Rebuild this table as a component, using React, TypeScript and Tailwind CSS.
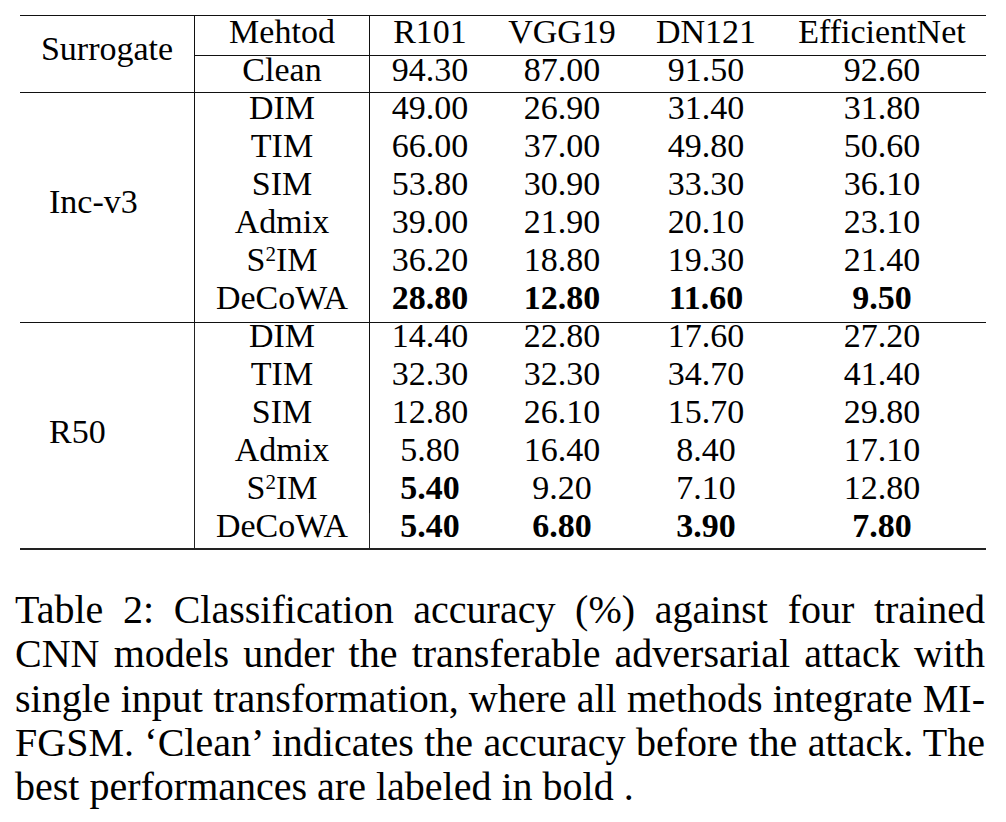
import type { ReactNode } from 'react';

type Row = { method: ReactNode; values: string[]; bold: boolean[] };

const s2im = (
  <>
    S<sup className="text-[21px]">2</sup>IM
  </>
);

const incRows: Row[] = [
  { method: 'DIM', values: ['49.00', '26.90', '31.40', '31.80'], bold: [false, false, false, false] },
  { method: 'TIM', values: ['66.00', '37.00', '49.80', '50.60'], bold: [false, false, false, false] },
  { method: 'SIM', values: ['53.80', '30.90', '33.30', '36.10'], bold: [false, false, false, false] },
  { method: 'Admix', values: ['39.00', '21.90', '20.10', '23.10'], bold: [false, false, false, false] },
  { method: s2im, values: ['36.20', '18.80', '19.30', '21.40'], bold: [false, false, false, false] },
  { method: 'DeCoWA', values: ['28.80', '12.80', '11.60', '9.50'], bold: [true, true, true, true] },
];

const r50Rows: Row[] = [
  { method: 'DIM', values: ['14.40', '22.80', '17.60', '27.20'], bold: [false, false, false, false] },
  { method: 'TIM', values: ['32.30', '32.30', '34.70', '41.40'], bold: [false, false, false, false] },
  { method: 'SIM', values: ['12.80', '26.10', '15.70', '29.80'], bold: [false, false, false, false] },
  { method: 'Admix', values: ['5.80', '16.40', '8.40', '17.10'], bold: [false, false, false, false] },
  { method: s2im, values: ['5.40', '9.20', '7.10', '12.80'], bold: [true, false, false, false] },
  { method: 'DeCoWA', values: ['5.40', '6.80', '3.90', '7.80'], bold: [true, true, true, true] },
];

const captionLines = [
  'Table 2: Classification accuracy (%) against four trained',
  'CNN models under the transferable adversarial attack with',
  'single input transformation, where all methods integrate MI-',
  'FGSM. \u2018Clean\u2019 indicates the accuracy before the attack. The',
];

export default function App() {
  return (
    <div className="w-[1006px] h-[822px] bg-white text-black [font-family:'Liberation_Serif','Times_New_Roman',serif] pt-[15px] overflow-hidden">
      <table className="ml-[20px] w-[966px] table-fixed border-separate border-spacing-0 text-[34px]">
        <colgroup>
          <col className="w-[175px]" />
          <col className="w-[175px]" />
          <col className="w-[120px]" />
          <col className="w-[144px]" />
          <col className="w-[144px]" />
          <col className="w-[208px]" />
        </colgroup>
        <thead>
          <tr>
            <th rowSpan={2} className="font-normal align-top text-center p-0 pt-[17px] leading-[31px] border-t border-b border-r border-[#111]">
              Surrogate
            </th>
            <th className="font-normal align-top text-center p-0 pb-[8px] leading-[31px] border-t border-b border-r border-[#111]">Mehtod</th>
            {['R101', 'VGG19', 'DN121', 'EfficientNet'].map((h) => (
              <th key={h} className="font-normal align-top text-center p-0 pb-[8px] leading-[31px] border-t border-b border-[#111]">
                {h}
              </th>
            ))}
          </tr>
          <tr>
            <td className="align-top text-center p-0 pb-[9px] leading-[27px] border-b border-r border-[#111]">Clean</td>
            {['94.30', '87.00', '91.50', '92.60'].map((v, i) => (
              <td key={i} className="align-top text-center p-0 pb-[9px] leading-[27px] border-b border-[#111]">
                {v}
              </td>
            ))}
          </tr>
        </thead>
        <tbody>
          {incRows.map((r, i) => {
            const last = i === incRows.length - 1;
            const cell = last ? 'pb-[10px] border-b border-[#111]' : 'pb-[9px]';
            return (
              <tr key={'inc' + i}>
                {i === 0 && (
                  <td rowSpan={6} className="align-top text-left p-0 pl-[29px] pt-[93px] leading-[31px] border-b border-r border-[#111]">
                    Inc-v3
                  </td>
                )}
                <td className={`align-top text-center p-0 leading-[29px] border-r border-[#111] ${cell}`}>{r.method}</td>
                {r.values.map((v, j) => (
                  <td key={j} className={`align-top text-center p-0 leading-[29px] ${cell} ${r.bold[j] ? 'font-bold' : ''}`}>
                    {v}
                  </td>
                ))}
              </tr>
            );
          })}
          {r50Rows.map((r, i) => {
            const last = i === r50Rows.length - 1;
            const cell = last ? 'pb-[10px] border-b-2 border-[#222]' : 'pb-[13px]';
            return (
              <tr key={'r50' + i}>
                {i === 0 && (
                  <td rowSpan={6} className="align-top text-left p-0 pl-[29px] pt-[93px] leading-[31px] border-b-2 border-r border-[#222]">
                    R50
                  </td>
                )}
                <td className={`align-top text-center p-0 leading-[25px] border-r border-[#111] ${cell}`}>{r.method}</td>
                {r.values.map((v, j) => (
                  <td key={j} className={`align-top text-center p-0 leading-[25px] ${cell} ${r.bold[j] ? 'font-bold' : ''}`}>
                    {v}
                  </td>
                ))}
              </tr>
            );
          })}
        </tbody>
      </table>

      <div className="ml-[15px] w-[970px] mt-[38px] text-[40px] leading-[44.25px]">
        {captionLines.map((line) => (
          <p key={line} className="whitespace-nowrap text-justify [text-align-last:justify]">
            {line}
          </p>
        ))}
        <p className="whitespace-nowrap">best performances are labeled in bold .</p>
      </div>
    </div>
  );
}
